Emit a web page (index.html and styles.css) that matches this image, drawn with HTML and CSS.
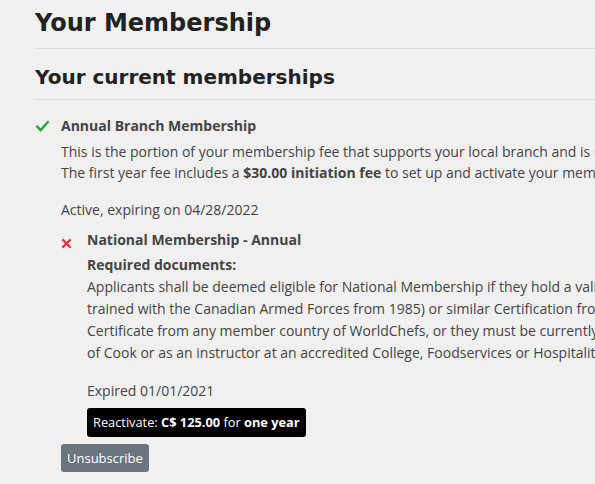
FILE: index.html
```html
<!DOCTYPE html>
<html>
<head>
<meta charset="utf-8">
<link rel="stylesheet" href="styles.css">
</head>
<body>
<div class="page">
  <h1 class="title">Your Membership</h1>
  <h2 class="subtitle">Your current memberships</h2>
  <ul class="memberships">
    <li class="membership">
      <span class="icon icon-ok"><svg viewBox="0 0 16 16" width="15" height="15"><path d="M1.5 8.5 L6 13 L14.5 3.5" fill="none" stroke="#28a745" stroke-width="2.6"/></svg></span>
      <div class="m-body">
        <div class="m-name">Annual Branch Membership</div>
        <p class="m-desc">This is the portion of your membership fee that supports your local branch and is used for local events, programs and activities.<br>The first year fee includes a <b>$30.00 initiation fee</b> to set up and activate your membership with the branch.</p>
        <p class="m-status">Active, expiring on 04/28/2022</p>
        <ul class="memberships nested">
          <li class="membership">
            <span class="icon icon-x"><svg viewBox="0 0 12 12" width="11" height="11"><path d="M1.5 1.5 L10.5 10.5 M10.5 1.5 L1.5 10.5" fill="none" stroke="#dc3545" stroke-width="2.4"/></svg></span>
            <div class="m-body">
              <div class="m-name">National Membership - Annual</div>
              <div class="m-req">Required documents:</div>
              <p class="m-desc">Applicants shall be deemed eligible for National Membership if they hold a valid Red Seal Certification (or Journeyman Cook<br>trained with the Canadian Armed Forces from 1985) or similar Certification from a recognized body, or a Professional Cook<br>Certificate from any member country of WorldChefs, or they must be currently employed in the foodservice industry in the position<br>of Cook or as an instructor at an accredited College, Foodservices or Hospitality institution.</p>
              <p class="m-status">Expired 01/01/2021</p>
              <span class="reactivate">Reactivate: <b>C$ 125.00</b> for <b>one year</b></span>
            </div>
          </li>
        </ul>
      </div>
    </li>
  </ul>
  <button class="btn-unsub">Unsubscribe</button>
</div>
</body>
</html>
```
FILE: styles.css
```css
html, body {
  margin: 0;
  padding: 0;
  overflow: hidden;
  background: #f0f0f0;
}
body {
  font-family: "Open Sans", "Noto Sans", sans-serif;
  font-size: 14px;
  color: #444;
}
.page {
  width: 1100px;
  padding: 9px 0 0 35px;
}
.title {
  font-family: "DejaVu Sans", sans-serif;
  font-weight: bold;
  font-size: 24px;
  color: #222;
  margin: 0;
  padding-bottom: 11px;
  border-bottom: 1px solid #dcdde1;
}
.subtitle {
  font-family: "DejaVu Sans", sans-serif;
  font-weight: bold;
  font-size: 20px;
  color: #222;
  margin: 0;
  padding: 16px 0 10px;
  border-bottom: 1px solid #dcdde1;
}
.memberships {
  list-style: none;
  margin: 15px 0 0;
  padding: 0;
}
.memberships.nested {
  margin-top: 9px;
}
.membership {
  display: flex;
  gap: 12px;
}
.icon {
  width: 14px;
  flex: none;
  padding-top: 3px;
}
.nested .icon {
  width: 14px;
  padding-top: 5px;
}
.m-name {
  font-weight: bold;
  line-height: 22px;
}
.m-req {
  font-weight: bold;
  line-height: 22px;
  margin-top: 3px;
}
.m-desc {
  margin: 4px 0 0;
  line-height: 21px;
  white-space: nowrap;
}
.nested .m-desc {
  margin: 0;
  line-height: 22px;
}
.m-status {
  margin: 16px 0 0;
  line-height: 21px;
}
.nested .m-status {
  margin-top: 16px;
}
.reactivate {
  display: inline-block;
  margin-top: 7px;
  background: #000;
  color: #fff;
  border-radius: 3px;
  padding: 5px 6px;
  font-size: 12.8px;
  line-height: 19px;
}
.btn-unsub {
  margin: 7px 0 0 26px;
  background: #6c757d;
  color: #fff;
  border: none;
  border-radius: 3px;
  font-family: "Open Sans", sans-serif;
  font-size: 13px;
  padding: 5px 6px;
  line-height: 18px;
}
```
